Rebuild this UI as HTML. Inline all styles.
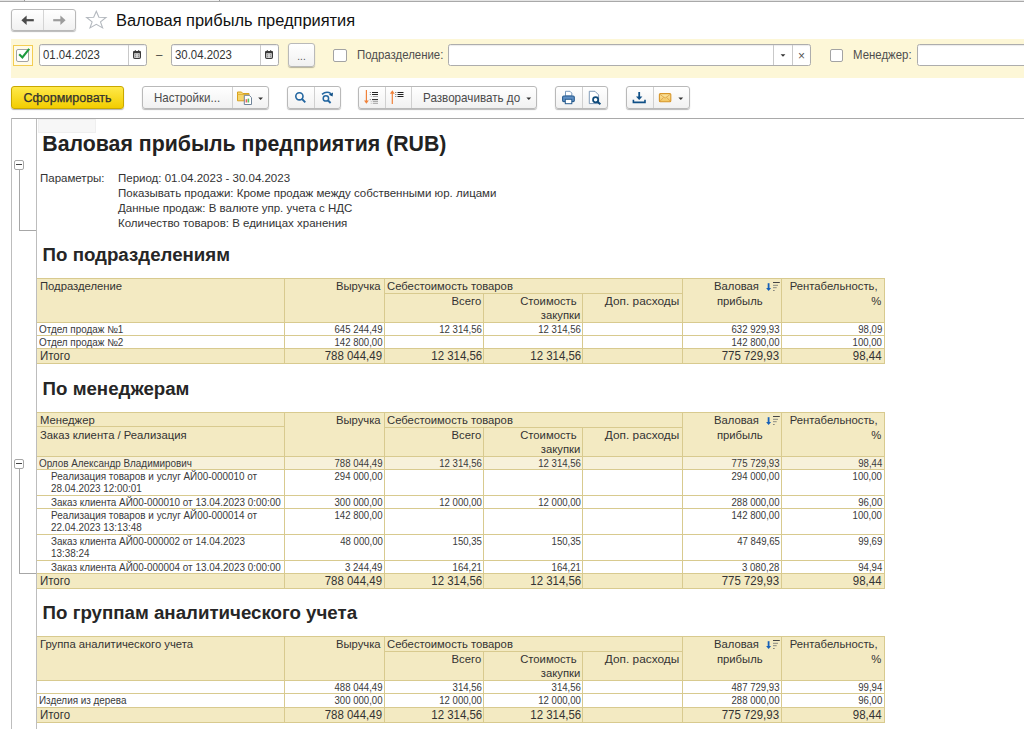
<!DOCTYPE html>
<html><head><meta charset="utf-8"><title>Валовая прибыль предприятия</title>
<style>
html,body{margin:0;padding:0;background:#fff;}
body{width:1024px;height:729px;position:relative;overflow:hidden;font-family:"Liberation Sans", sans-serif;}
svg{overflow:visible}
</style></head><body>
<div style="position:absolute;left:0px;top:0px;width:1024px;height:1px;background:#e5e5e5"></div>
<div style="position:absolute;left:25px;top:0px;width:194px;height:1px;background:#f2f2f2"></div>
<div style="position:absolute;left:0px;top:1px;width:1024px;height:1px;background:#a9a9a9"></div>
<div style="position:absolute;left:24px;top:0px;width:1px;height:1px;background:#9a9a9a"></div>
<div style="position:absolute;left:219px;top:0px;width:1px;height:1px;background:#9a9a9a"></div>
<div style="position:absolute;left:11px;top:9px;width:65px;height:22px;border:1px solid #b9b9b9;border-radius:3px;background:linear-gradient(#ffffff,#f1f1f1);box-shadow:0 1px 1px rgba(0,0,0,0.28);box-sizing:border-box"></div>
<div style="position:absolute;left:43px;top:10px;width:1px;height:20px;background:#d4d4d4"></div>
<svg style="position:absolute;left:11px;top:9px" width="65" height="22" viewBox="0 0 65 22"><path d="M13 11.2 L22.8 11.2" stroke="#4a4a4a" stroke-width="2.2"/><path d="M10.4 11.2 L15.6 6.4 L15.6 16 Z" fill="#4a4a4a"/><path d="M42.2 11.2 L52 11.2" stroke="#9c9c9c" stroke-width="2.2"/><path d="M54.6 11.2 L49.4 6.4 L49.4 16 Z" fill="#9c9c9c"/></svg>
<svg style="position:absolute;left:84px;top:8px" width="26" height="24" viewBox="0 0 26 24"><path d="M12.3 3.3 L14.9 9.2 L22.0 9.5 L16.5 13.9 L18.6 19.9 L12.3 16.3 L6.0 19.9 L8.1 13.9 L2.6 9.5 L9.7 9.2 Z" fill="none" stroke="#b3b8be" stroke-width="1.1" stroke-linejoin="miter"/></svg>
<div style="position:absolute;left:115.5px;top:9.94px;line-height:21px;font-size:17.2px;white-space:nowrap;transform:scaleX(0.955);transform-origin:left center;color:#111">Валовая прибыль предприятия</div>
<div style="position:absolute;left:11px;top:39px;width:1013px;height:39px;background:#fdf7d7"></div>
<div style="position:absolute;left:13px;top:45px;width:20px;height:21px;border:1px solid #f3cd52;background:#fffbe8;box-sizing:border-box"></div>
<div style="position:absolute;left:16px;top:49px;width:13px;height:13px;border:1px solid #a3a3a3;border-radius:2px;background:#fff;box-sizing:border-box"></div>
<svg style="position:absolute;left:16px;top:47px" width="16" height="16" viewBox="0 0 16 16"><path d="M3.2 7.2 L6.4 10.4 L13.2 1.8" fill="none" stroke="#1e9a3e" stroke-width="2.1"/></svg>
<div style="position:absolute;left:39px;top:44px;width:108px;height:22px;border:1px solid #adadad;border-radius:2.5px;background:#fff;box-sizing:border-box;box-shadow:inset 0 1px 1px rgba(0,0,0,0.08)"></div>
<div style="position:absolute;left:128px;top:45px;width:1px;height:20px;background:#c9c9c9"></div>
<svg style="position:absolute;left:132px;top:48.5px" width="10" height="11" viewBox="0 0 10 11"><rect x="1.6" y="2.6" width="6.8" height="6.9" rx="1.2" fill="#dcdcdc" stroke="#3a3a3a" stroke-width="1.2"/><rect x="1.2" y="2.2" width="7.6" height="2" fill="#3a3a3a"/><path d="M3.3 1.1 V2.6 M6.7 1.1 V2.6" stroke="#3a3a3a" stroke-width="1"/><path d="M3 5.9 H4.2 M5.8 5.9 H7 M3 7.8 H4.2 M5.8 7.8 H7" stroke="#666" stroke-width="0.9"/></svg>
<div style="position:absolute;left:43px;top:46.90px;line-height:16px;font-size:13px;white-space:nowrap;transform:scaleX(0.875);transform-origin:left center;color:#333">01.04.2023</div>
<div style="position:absolute;left:156px;top:47.38px;line-height:14px;font-size:11.6px;white-space:nowrap;color:#333">–</div>
<div style="position:absolute;left:171px;top:44px;width:108px;height:22px;border:1px solid #adadad;border-radius:2.5px;background:#fff;box-sizing:border-box;box-shadow:inset 0 1px 1px rgba(0,0,0,0.08)"></div>
<div style="position:absolute;left:260px;top:45px;width:1px;height:20px;background:#c9c9c9"></div>
<svg style="position:absolute;left:264px;top:48.5px" width="10" height="11" viewBox="0 0 10 11"><rect x="1.6" y="2.6" width="6.8" height="6.9" rx="1.2" fill="#dcdcdc" stroke="#3a3a3a" stroke-width="1.2"/><rect x="1.2" y="2.2" width="7.6" height="2" fill="#3a3a3a"/><path d="M3.3 1.1 V2.6 M6.7 1.1 V2.6" stroke="#3a3a3a" stroke-width="1"/><path d="M3 5.9 H4.2 M5.8 5.9 H7 M3 7.8 H4.2 M5.8 7.8 H7" stroke="#666" stroke-width="0.9"/></svg>
<div style="position:absolute;left:175px;top:46.90px;line-height:16px;font-size:13px;white-space:nowrap;transform:scaleX(0.875);transform-origin:left center;color:#333">30.04.2023</div>
<div style="position:absolute;left:288px;top:43px;width:27px;height:24px;border:1px solid #b9b9b9;border-radius:3px;background:linear-gradient(#ffffff,#f1f1f1);box-shadow:0 1px 1px rgba(0,0,0,0.28);box-sizing:border-box"></div>
<div style="position:absolute;left:101.5px;width:400px;top:50.53px;line-height:12px;font-size:10px;white-space:nowrap;text-align:center;color:#555">...</div>
<div style="position:absolute;left:333px;top:49px;width:14px;height:13px;border:1px solid #a3a3a3;border-radius:2px;background:#fff;box-sizing:border-box"></div>
<div style="position:absolute;left:357px;top:48.08px;line-height:14px;font-size:11.9px;white-space:nowrap;transform:scaleX(0.96);transform-origin:left center;color:#4d4d4d">Подразделение:</div>
<div style="position:absolute;left:448px;top:44px;width:363px;height:22px;border:1px solid #adadad;border-radius:2.5px;background:#fff;box-sizing:border-box;box-shadow:inset 0 1px 1px rgba(0,0,0,0.08)"></div>
<div style="position:absolute;left:773px;top:45px;width:1px;height:20px;background:#c9c9c9"></div>
<div style="position:absolute;left:792px;top:45px;width:1px;height:20px;background:#c9c9c9"></div>
<svg style="position:absolute;left:777px;top:50px" width="12" height="10" viewBox="0 0 12 10"><path d="M3.6 4.2 L8.4 4.2 L6 6.8 Z" fill="#333"/></svg>
<div style="position:absolute;left:601.5px;width:400px;top:48.84px;line-height:14px;font-size:12px;white-space:nowrap;text-align:center;color:#555">×</div>
<div style="position:absolute;left:830px;top:49px;width:13px;height:13px;border:1px solid #a3a3a3;border-radius:2px;background:#fff;box-sizing:border-box"></div>
<div style="position:absolute;left:853px;top:48.08px;line-height:14px;font-size:11.9px;white-space:nowrap;transform:scaleX(0.96);transform-origin:left center;color:#4d4d4d">Менеджер:</div>
<div style="position:absolute;left:917px;top:44px;width:120px;height:22px;border:1px solid #adadad;border-radius:2.5px;background:#fff;box-sizing:border-box;box-shadow:inset 0 1px 1px rgba(0,0,0,0.08)"></div>
<div style="position:absolute;left:11px;top:86px;width:113px;height:23px;border:1px solid #c9a800;border-radius:3px;background:linear-gradient(#ffe94a,#f2cd00);box-shadow:0 1px 1px rgba(0,0,0,0.3);box-sizing:border-box"></div>
<div style="position:absolute;left:-132.5px;width:400px;top:90.77px;line-height:15px;font-size:12.5px;white-space:nowrap;text-align:center;color:#303030;-webkit-text-stroke:0.25px #303030">Сформировать</div>
<div style="position:absolute;left:142px;top:86px;width:127px;height:23px;border:1px solid #b9b9b9;border-radius:3px;background:linear-gradient(#ffffff,#f1f1f1);box-shadow:0 1px 1px rgba(0,0,0,0.28);box-sizing:border-box"></div>
<div style="position:absolute;left:232px;top:87px;width:1px;height:21px;background:#d0d0d0"></div>
<div style="position:absolute;left:-13px;width:400px;top:90.68px;line-height:14px;font-size:11.9px;white-space:nowrap;text-align:center;transform:scaleX(0.97);transform-origin:center center;color:#4a4a4a">Настройки...</div>
<svg style="position:absolute;left:236px;top:89px" width="18" height="17" viewBox="0 0 18 17"><path d="M1.5 3 H5.5 L6.8 4.5 H13 V11.8 H1.5 Z" fill="#f6d66e" stroke="#d9a21e" stroke-width="1"/><path d="M1.5 5.5 H13" stroke="#e2b43c" stroke-width="1"/><path d="M8.3 6.3 H13.2 L15.5 8.6 V15.5 H8.3 Z" fill="#fff" stroke="#6f8399" stroke-width="1"/><rect x="9.6" y="10.2" width="1.6" height="3.3" fill="#ee6060"/><rect x="11.6" y="9.6" width="1.6" height="3.9" fill="#59c45f"/></svg>
<svg style="position:absolute;left:256px;top:94px" width="10" height="8" viewBox="0 0 10 8"><path d="M2.2 3.4 L7 3.4 L4.6 5.9 Z" fill="#333"/></svg>
<div style="position:absolute;left:287px;top:86px;width:54px;height:23px;border:1px solid #b9b9b9;border-radius:3px;background:linear-gradient(#ffffff,#f1f1f1);box-shadow:0 1px 1px rgba(0,0,0,0.28);box-sizing:border-box"></div>
<div style="position:absolute;left:314px;top:87px;width:1px;height:21px;background:#d0d0d0"></div>
<svg style="position:absolute;left:287px;top:86px" width="54" height="23" viewBox="0 0 54 23"><circle cx="12.4" cy="10.3" r="3.6" fill="none" stroke="#2366a0" stroke-width="1.6"/><path d="M15 13 L18.3 16.3" stroke="#2366a0" stroke-width="1.9"/><circle cx="38.9" cy="12.4" r="2.7" fill="none" stroke="#2366a0" stroke-width="1.5"/><path d="M41.1 14.5 L43.6 17" stroke="#2366a0" stroke-width="1.9"/><path d="M35 8.4 Q39.5 4.6 44 7.6" fill="none" stroke="#2366a0" stroke-width="1.5"/><path d="M46 6.4 L45.6 10.6 L41.8 8.8 Z" fill="#0f4f86"/></svg>
<div style="position:absolute;left:358px;top:86px;width:179px;height:23px;border:1px solid #b9b9b9;border-radius:3px;background:linear-gradient(#ffffff,#f1f1f1);box-shadow:0 1px 1px rgba(0,0,0,0.28);box-sizing:border-box"></div>
<div style="position:absolute;left:385px;top:87px;width:1px;height:21px;background:#d0d0d0"></div>
<div style="position:absolute;left:411px;top:87px;width:1px;height:21px;background:#d0d0d0"></div>
<svg style="position:absolute;left:358px;top:86px" width="54" height="23" viewBox="0 0 54 23"><path d="M8.4 4 V16" stroke="#f0823a" stroke-width="1.2"/><path d="M6 14.5 L10.8 14.5 L8.4 17.8 Z" fill="#f0823a"/><path d="M11.8 6.5 H12.8 M11.8 8.5 H12.8 M11.8 13.6 H12.8" stroke="#777" stroke-width="1"/><path d="M14 6.5 H20 M14 8.5 H20 M14 13.6 H20" stroke="#222" stroke-width="1"/><path d="M12.8 10.5 H13.6 M12.8 15.4 H13.6 M12.8 17.3 H13.6" stroke="#aaa" stroke-width="0.9"/><path d="M14.8 10.5 H20 M14.8 15.4 H20 M14.8 17.3 H20" stroke="#999" stroke-width="0.9"/><path d="M34.3 6 V18" stroke="#f0823a" stroke-width="1.2"/><path d="M31.9 7.8 L36.7 7.8 L34.3 4.3 Z" fill="#f0823a"/><path d="M37.3 6.5 H38.3 M37.3 8.5 H38.3 M37.3 10.5 H38.3" stroke="#666" stroke-width="1"/><path d="M39.5 6.5 H45.5 M39.5 8.5 H45.5 M39.5 10.5 H45.5" stroke="#222" stroke-width="1"/></svg>
<div style="position:absolute;left:423px;top:90.68px;line-height:14px;font-size:11.9px;white-space:nowrap;transform:scaleX(0.98);transform-origin:left center;color:#4a4a4a">Разворачивать до</div>
<svg style="position:absolute;left:524px;top:94px" width="12" height="8" viewBox="0 0 12 8"><path d="M2.4 3.6 L7.2 3.6 L4.8 6.1 Z" fill="#333"/></svg>
<div style="position:absolute;left:555px;top:86px;width:53px;height:23px;border:1px solid #b9b9b9;border-radius:3px;background:linear-gradient(#ffffff,#f1f1f1);box-shadow:0 1px 1px rgba(0,0,0,0.28);box-sizing:border-box"></div>
<div style="position:absolute;left:582px;top:87px;width:1px;height:21px;background:#d0d0d0"></div>
<svg style="position:absolute;left:555px;top:86px" width="53" height="23" viewBox="0 0 53 23"><path d="M10.5 5.3 H15 L16.8 7.1 V10 H10.5 Z" fill="#fff" stroke="#6a8fb5" stroke-width="0.9"/><rect x="7.6" y="10" width="11.7" height="5.6" rx="1.2" fill="#5f8fc4" stroke="#285d8f" stroke-width="1.1"/><rect x="10.3" y="13.3" width="6.5" height="4.4" fill="#fff" stroke="#285d8f" stroke-width="1"/><path d="M34.3 5.3 H40 L43.6 8.9 V17.6 H34.3 Z" fill="#fff" stroke="#7390b0" stroke-width="0.9"/><circle cx="40.6" cy="13.8" r="2.6" fill="#fff" stroke="#0e4a7a" stroke-width="1.7"/><path d="M42.5 15.8 L45.4 18.3" stroke="#0e4a7a" stroke-width="2"/></svg>
<div style="position:absolute;left:626px;top:86px;width:64px;height:23px;border:1px solid #b9b9b9;border-radius:3px;background:linear-gradient(#ffffff,#f1f1f1);box-shadow:0 1px 1px rgba(0,0,0,0.28);box-sizing:border-box"></div>
<div style="position:absolute;left:653px;top:87px;width:1px;height:21px;background:#d0d0d0"></div>
<svg style="position:absolute;left:626px;top:86px" width="64" height="23" viewBox="0 0 64 23"><path d="M13.2 6 V12.5" stroke="#0f4f86" stroke-width="1.8"/><path d="M10 10.6 L16.4 10.6 L13.2 14 Z" fill="#0f4f86"/><path d="M7.4 13.8 V16.4 H19 V13.8" fill="none" stroke="#0f4f86" stroke-width="1.6"/><defs><linearGradient id="env" x1="0" y1="0" x2="0" y2="1"><stop offset="0" stop-color="#fbe7a6"/><stop offset="1" stop-color="#f2c45c"/></linearGradient></defs><rect x="33.4" y="7.6" width="11.4" height="8.1" rx="1" fill="url(#env)" stroke="#d8962a" stroke-width="1.1"/><path d="M34 8.4 L39.1 12.2 L44.2 8.4 M34.2 15 L37.6 11.4 M44 15 L40.6 11.4" fill="none" stroke="#dba046" stroke-width="0.8"/></svg>
<svg style="position:absolute;left:676px;top:94px" width="12" height="8" viewBox="0 0 12 8"><path d="M2.4 3.4 L7.2 3.4 L4.8 5.9 Z" fill="#333"/></svg>
<div style="position:absolute;left:11px;top:118px;width:1013px;height:1px;background:#a9a9a9"></div>
<div style="position:absolute;left:11px;top:118px;width:1px;height:611px;background:#bdbdbd"></div>
<div style="position:absolute;left:36px;top:119px;width:1px;height:610px;background:#bdbdbd"></div>
<div style="position:absolute;left:38px;top:119px;width:58px;height:14px;background:#f7f7f7;border:1px solid #efefef;box-sizing:border-box"></div>
<div style="position:absolute;left:42.3px;top:131.02px;line-height:26px;font-size:21.3px;white-space:nowrap;color:#222;font-weight:bold">Валовая прибыль предприятия (RUB)</div>
<div style="position:absolute;left:14px;top:160px;width:10px;height:10px;border:1px solid #a7a7a7;border-radius:2px;background:#fff;box-sizing:border-box"></div>
<div style="position:absolute;left:16px;top:164px;width:6px;height:1px;background:#444"></div>
<div style="position:absolute;left:19px;top:170px;width:1px;height:61px;background:#a7a7a7"></div>
<div style="position:absolute;left:19px;top:230px;width:17px;height:1px;background:#a7a7a7"></div>
<div style="position:absolute;left:40px;top:170.82px;line-height:14px;font-size:11.5px;white-space:nowrap;color:#333">Параметры:</div>
<div style="position:absolute;left:118px;top:170.82px;line-height:14px;font-size:11.5px;white-space:nowrap;color:#333">Период: 01.04.2023 - 30.04.2023</div>
<div style="position:absolute;left:118px;top:185.72px;line-height:14px;font-size:11.5px;white-space:nowrap;color:#333">Показывать продажи: Кроме продаж между собственными юр. лицами</div>
<div style="position:absolute;left:118px;top:200.62px;line-height:14px;font-size:11.5px;white-space:nowrap;color:#333">Данные продаж: В валюте упр. учета с НДС</div>
<div style="position:absolute;left:118px;top:215.52px;line-height:14px;font-size:11.5px;white-space:nowrap;color:#333">Количество товаров: В единицах хранения</div>
<div style="position:absolute;left:42.6px;top:243.72px;line-height:22px;font-size:18.7px;white-space:nowrap;color:#262626;font-weight:bold">По подразделениям</div>
<div style="position:absolute;left:37px;top:278px;width:847px;height:44px;background:#f3eac2"></div>
<div style="position:absolute;left:37px;top:278px;width:848px;height:1px;background:#d8ca8f"></div>
<div style="position:absolute;left:37px;top:322px;width:848px;height:1px;background:#d8ca8f"></div>
<div style="position:absolute;left:284px;top:278px;width:1px;height:44px;background:#d8ca8f"></div>
<div style="position:absolute;left:384px;top:278px;width:1px;height:44px;background:#d8ca8f"></div>
<div style="position:absolute;left:483px;top:293px;width:1px;height:29px;background:#d8ca8f"></div>
<div style="position:absolute;left:582px;top:293px;width:1px;height:29px;background:#d8ca8f"></div>
<div style="position:absolute;left:682px;top:278px;width:1px;height:44px;background:#d8ca8f"></div>
<div style="position:absolute;left:781px;top:278px;width:1px;height:44px;background:#d8ca8f"></div>
<div style="position:absolute;left:884px;top:278px;width:1px;height:44px;background:#d8ca8f"></div>
<div style="position:absolute;left:384px;top:293px;width:298px;height:1px;background:#d8ca8f"></div>
<div style="position:absolute;left:40px;top:279.02px;line-height:14px;font-size:11.5px;white-space:nowrap;transform:scaleX(0.98);transform-origin:left center;color:#333">Подразделение</div>
<div style="position:absolute;right:643px;top:279.02px;line-height:14px;font-size:11.5px;white-space:nowrap;text-align:right;transform:scaleX(0.98);transform-origin:right center;color:#333">Выручка</div>
<div style="position:absolute;left:387px;top:279.02px;line-height:14px;font-size:11.5px;white-space:nowrap;transform:scaleX(0.98);transform-origin:left center;color:#333">Себестоимость товаров</div>
<div style="position:absolute;right:543px;top:293.52px;line-height:14px;font-size:11.5px;white-space:nowrap;text-align:right;transform:scaleX(0.98);transform-origin:right center;color:#333">Всего</div>
<div style="position:absolute;right:447.5px;top:293.52px;line-height:14px;font-size:11.5px;white-space:nowrap;text-align:right;transform:scaleX(0.98);transform-origin:right center;color:#333">Стоимость</div>
<div style="position:absolute;right:444px;top:307.52px;line-height:14px;font-size:11.5px;white-space:nowrap;text-align:right;transform:scaleX(0.98);transform-origin:right center;color:#333">закупки</div>
<div style="position:absolute;right:344.5px;top:293.52px;line-height:14px;font-size:11.5px;white-space:nowrap;text-align:right;transform:scaleX(1.03);transform-origin:right center;color:#333">Доп. расходы</div>
<div style="position:absolute;right:265px;top:279.02px;line-height:14px;font-size:11.5px;white-space:nowrap;text-align:right;transform:scaleX(0.98);transform-origin:right center;color:#333">Валовая</div>
<div style="position:absolute;right:261px;top:293.52px;line-height:14px;font-size:11.5px;white-space:nowrap;text-align:right;transform:scaleX(0.98);transform-origin:right center;color:#333">прибыль</div>
<svg style="position:absolute;left:765px;top:281px" width="16" height="11" viewBox="0 0 16 11"><path d="M3.6 2.2 V7.6" stroke="#1660b8" stroke-width="1.8"/><path d="M1.1 6.9 L6.1 6.9 L3.6 9.9 Z" fill="#1660b8"/><path d="M8 1.5 H14.8" stroke="#444" stroke-width="1"/><path d="M8 4.3 H13 M8 6.7 H11.7 M8 9.5 H9.7" stroke="#8a8a80" stroke-width="1"/></svg>
<div style="position:absolute;right:146.5px;top:279.02px;line-height:14px;font-size:11.5px;white-space:nowrap;text-align:right;transform:scaleX(0.98);transform-origin:right center;color:#333">Рентабельность,</div>
<div style="position:absolute;right:143px;top:293.52px;line-height:14px;font-size:11.5px;white-space:nowrap;text-align:right;transform:scaleX(0.98);transform-origin:right center;color:#333">%</div>
<div style="position:absolute;left:37px;top:323px;width:847px;height:12px;background:#fff"></div>
<div style="position:absolute;left:284px;top:322px;width:1px;height:13px;background:#d8ca8f"></div>
<div style="position:absolute;left:384px;top:322px;width:1px;height:13px;background:#d8ca8f"></div>
<div style="position:absolute;left:483px;top:322px;width:1px;height:13px;background:#d8ca8f"></div>
<div style="position:absolute;left:582px;top:322px;width:1px;height:13px;background:#d8ca8f"></div>
<div style="position:absolute;left:682px;top:322px;width:1px;height:13px;background:#d8ca8f"></div>
<div style="position:absolute;left:781px;top:322px;width:1px;height:13px;background:#d8ca8f"></div>
<div style="position:absolute;left:884px;top:322px;width:1px;height:13px;background:#d8ca8f"></div>
<div style="position:absolute;left:37px;top:335px;width:848px;height:1px;background:#d8ca8f"></div>
<div style="position:absolute;left:38.5px;top:323.70px;line-height:12px;font-size:10.1px;white-space:nowrap;transform:scaleX(0.98);transform-origin:left center;color:#3a3a3a">Отдел продаж №1</div>
<div style="position:absolute;right:641.5px;top:323.70px;line-height:12px;font-size:10.1px;white-space:nowrap;text-align:right;transform:scaleX(0.95);transform-origin:right center;color:#3a3a3a">645 244,49</div>
<div style="position:absolute;right:542.5px;top:323.70px;line-height:12px;font-size:10.1px;white-space:nowrap;text-align:right;transform:scaleX(0.95);transform-origin:right center;color:#3a3a3a">12 314,56</div>
<div style="position:absolute;right:443px;top:323.70px;line-height:12px;font-size:10.1px;white-space:nowrap;text-align:right;transform:scaleX(0.95);transform-origin:right center;color:#3a3a3a">12 314,56</div>
<div style="position:absolute;right:244.5px;top:323.70px;line-height:12px;font-size:10.1px;white-space:nowrap;text-align:right;transform:scaleX(0.95);transform-origin:right center;color:#3a3a3a">632 929,93</div>
<div style="position:absolute;right:142px;top:323.70px;line-height:12px;font-size:10.1px;white-space:nowrap;text-align:right;transform:scaleX(0.95);transform-origin:right center;color:#3a3a3a">98,09</div>
<div style="position:absolute;left:37px;top:336px;width:847px;height:12px;background:#fff"></div>
<div style="position:absolute;left:284px;top:335px;width:1px;height:13px;background:#d8ca8f"></div>
<div style="position:absolute;left:384px;top:335px;width:1px;height:13px;background:#d8ca8f"></div>
<div style="position:absolute;left:483px;top:335px;width:1px;height:13px;background:#d8ca8f"></div>
<div style="position:absolute;left:582px;top:335px;width:1px;height:13px;background:#d8ca8f"></div>
<div style="position:absolute;left:682px;top:335px;width:1px;height:13px;background:#d8ca8f"></div>
<div style="position:absolute;left:781px;top:335px;width:1px;height:13px;background:#d8ca8f"></div>
<div style="position:absolute;left:884px;top:335px;width:1px;height:13px;background:#d8ca8f"></div>
<div style="position:absolute;left:37px;top:348px;width:848px;height:1px;background:#d8ca8f"></div>
<div style="position:absolute;left:38.5px;top:336.70px;line-height:12px;font-size:10.1px;white-space:nowrap;transform:scaleX(0.98);transform-origin:left center;color:#3a3a3a">Отдел продаж №2</div>
<div style="position:absolute;right:641.5px;top:336.70px;line-height:12px;font-size:10.1px;white-space:nowrap;text-align:right;transform:scaleX(0.95);transform-origin:right center;color:#3a3a3a">142 800,00</div>
<div style="position:absolute;right:244.5px;top:336.70px;line-height:12px;font-size:10.1px;white-space:nowrap;text-align:right;transform:scaleX(0.95);transform-origin:right center;color:#3a3a3a">142 800,00</div>
<div style="position:absolute;right:142px;top:336.70px;line-height:12px;font-size:10.1px;white-space:nowrap;text-align:right;transform:scaleX(0.95);transform-origin:right center;color:#3a3a3a">100,00</div>
<div style="position:absolute;left:37px;top:349px;width:847px;height:14px;background:#f3eac2"></div>
<div style="position:absolute;left:284px;top:348px;width:1px;height:15px;background:#d8ca8f"></div>
<div style="position:absolute;left:384px;top:348px;width:1px;height:15px;background:#d8ca8f"></div>
<div style="position:absolute;left:483px;top:348px;width:1px;height:15px;background:#d8ca8f"></div>
<div style="position:absolute;left:582px;top:348px;width:1px;height:15px;background:#d8ca8f"></div>
<div style="position:absolute;left:682px;top:348px;width:1px;height:15px;background:#d8ca8f"></div>
<div style="position:absolute;left:781px;top:348px;width:1px;height:15px;background:#d8ca8f"></div>
<div style="position:absolute;left:884px;top:348px;width:1px;height:15px;background:#d8ca8f"></div>
<div style="position:absolute;left:37px;top:363px;width:848px;height:1px;background:#d8ca8f"></div>
<div style="position:absolute;left:39.5px;top:348.97px;line-height:15px;font-size:12.2px;white-space:nowrap;transform:scaleX(0.94);transform-origin:left center;color:#333">Итого</div>
<div style="position:absolute;right:641.7px;top:348.97px;line-height:15px;font-size:12.2px;white-space:nowrap;text-align:right;transform:scaleX(0.94);transform-origin:right center;color:#333">788 044,49</div>
<div style="position:absolute;right:542.2px;top:348.97px;line-height:15px;font-size:12.2px;white-space:nowrap;text-align:right;transform:scaleX(0.94);transform-origin:right center;color:#333">12 314,56</div>
<div style="position:absolute;right:443px;top:348.97px;line-height:15px;font-size:12.2px;white-space:nowrap;text-align:right;transform:scaleX(0.94);transform-origin:right center;color:#333">12 314,56</div>
<div style="position:absolute;right:245.20000000000005px;top:348.97px;line-height:15px;font-size:12.2px;white-space:nowrap;text-align:right;transform:scaleX(0.94);transform-origin:right center;color:#333">775 729,93</div>
<div style="position:absolute;right:142.5px;top:348.97px;line-height:15px;font-size:12.2px;white-space:nowrap;text-align:right;transform:scaleX(0.94);transform-origin:right center;color:#333">98,44</div>
<div style="position:absolute;left:42.6px;top:377.82px;line-height:22px;font-size:18.7px;white-space:nowrap;color:#262626;font-weight:bold">По менеджерам</div>
<div style="position:absolute;left:37px;top:412px;width:847px;height:44px;background:#f3eac2"></div>
<div style="position:absolute;left:37px;top:412px;width:848px;height:1px;background:#d8ca8f"></div>
<div style="position:absolute;left:37px;top:456px;width:848px;height:1px;background:#d8ca8f"></div>
<div style="position:absolute;left:284px;top:412px;width:1px;height:44px;background:#d8ca8f"></div>
<div style="position:absolute;left:384px;top:412px;width:1px;height:44px;background:#d8ca8f"></div>
<div style="position:absolute;left:483px;top:427px;width:1px;height:29px;background:#d8ca8f"></div>
<div style="position:absolute;left:582px;top:427px;width:1px;height:29px;background:#d8ca8f"></div>
<div style="position:absolute;left:682px;top:412px;width:1px;height:44px;background:#d8ca8f"></div>
<div style="position:absolute;left:781px;top:412px;width:1px;height:44px;background:#d8ca8f"></div>
<div style="position:absolute;left:884px;top:412px;width:1px;height:44px;background:#d8ca8f"></div>
<div style="position:absolute;left:384px;top:427px;width:298px;height:1px;background:#d8ca8f"></div>
<div style="position:absolute;left:37px;top:426px;width:247px;height:1px;background:#d8ca8f"></div>
<div style="position:absolute;left:40px;top:413.02px;line-height:14px;font-size:11.5px;white-space:nowrap;transform:scaleX(0.98);transform-origin:left center;color:#333">Менеджер</div>
<div style="position:absolute;left:40px;top:428.02px;line-height:14px;font-size:11.5px;white-space:nowrap;transform:scaleX(0.98);transform-origin:left center;color:#333">Заказ клиента / Реализация</div>
<div style="position:absolute;right:643px;top:413.02px;line-height:14px;font-size:11.5px;white-space:nowrap;text-align:right;transform:scaleX(0.98);transform-origin:right center;color:#333">Выручка</div>
<div style="position:absolute;left:387px;top:413.02px;line-height:14px;font-size:11.5px;white-space:nowrap;transform:scaleX(0.98);transform-origin:left center;color:#333">Себестоимость товаров</div>
<div style="position:absolute;right:543px;top:427.52px;line-height:14px;font-size:11.5px;white-space:nowrap;text-align:right;transform:scaleX(0.98);transform-origin:right center;color:#333">Всего</div>
<div style="position:absolute;right:447.5px;top:427.52px;line-height:14px;font-size:11.5px;white-space:nowrap;text-align:right;transform:scaleX(0.98);transform-origin:right center;color:#333">Стоимость</div>
<div style="position:absolute;right:444px;top:441.52px;line-height:14px;font-size:11.5px;white-space:nowrap;text-align:right;transform:scaleX(0.98);transform-origin:right center;color:#333">закупки</div>
<div style="position:absolute;right:344.5px;top:427.52px;line-height:14px;font-size:11.5px;white-space:nowrap;text-align:right;transform:scaleX(1.03);transform-origin:right center;color:#333">Доп. расходы</div>
<div style="position:absolute;right:265px;top:413.02px;line-height:14px;font-size:11.5px;white-space:nowrap;text-align:right;transform:scaleX(0.98);transform-origin:right center;color:#333">Валовая</div>
<div style="position:absolute;right:261px;top:427.52px;line-height:14px;font-size:11.5px;white-space:nowrap;text-align:right;transform:scaleX(0.98);transform-origin:right center;color:#333">прибыль</div>
<svg style="position:absolute;left:765px;top:415px" width="16" height="11" viewBox="0 0 16 11"><path d="M3.6 2.2 V7.6" stroke="#1660b8" stroke-width="1.8"/><path d="M1.1 6.9 L6.1 6.9 L3.6 9.9 Z" fill="#1660b8"/><path d="M8 1.5 H14.8" stroke="#444" stroke-width="1"/><path d="M8 4.3 H13 M8 6.7 H11.7 M8 9.5 H9.7" stroke="#8a8a80" stroke-width="1"/></svg>
<div style="position:absolute;right:146.5px;top:413.02px;line-height:14px;font-size:11.5px;white-space:nowrap;text-align:right;transform:scaleX(0.98);transform-origin:right center;color:#333">Рентабельность,</div>
<div style="position:absolute;right:143px;top:427.52px;line-height:14px;font-size:11.5px;white-space:nowrap;text-align:right;transform:scaleX(0.98);transform-origin:right center;color:#333">%</div>
<div style="position:absolute;left:37px;top:457px;width:847px;height:12px;background:#f7f1da"></div>
<div style="position:absolute;left:284px;top:456px;width:1px;height:13px;background:#d8ca8f"></div>
<div style="position:absolute;left:384px;top:456px;width:1px;height:13px;background:#d8ca8f"></div>
<div style="position:absolute;left:483px;top:456px;width:1px;height:13px;background:#d8ca8f"></div>
<div style="position:absolute;left:582px;top:456px;width:1px;height:13px;background:#d8ca8f"></div>
<div style="position:absolute;left:682px;top:456px;width:1px;height:13px;background:#d8ca8f"></div>
<div style="position:absolute;left:781px;top:456px;width:1px;height:13px;background:#d8ca8f"></div>
<div style="position:absolute;left:884px;top:456px;width:1px;height:13px;background:#d8ca8f"></div>
<div style="position:absolute;left:37px;top:469px;width:848px;height:1px;background:#d8ca8f"></div>
<div style="position:absolute;left:38.5px;top:457.70px;line-height:12px;font-size:10.1px;white-space:nowrap;transform:scaleX(0.98);transform-origin:left center;color:#3a3a3a">Орлов Александр Владимирович</div>
<div style="position:absolute;right:641.5px;top:457.70px;line-height:12px;font-size:10.1px;white-space:nowrap;text-align:right;transform:scaleX(0.95);transform-origin:right center;color:#3a3a3a">788 044,49</div>
<div style="position:absolute;right:542.5px;top:457.70px;line-height:12px;font-size:10.1px;white-space:nowrap;text-align:right;transform:scaleX(0.95);transform-origin:right center;color:#3a3a3a">12 314,56</div>
<div style="position:absolute;right:443px;top:457.70px;line-height:12px;font-size:10.1px;white-space:nowrap;text-align:right;transform:scaleX(0.95);transform-origin:right center;color:#3a3a3a">12 314,56</div>
<div style="position:absolute;right:244.5px;top:457.70px;line-height:12px;font-size:10.1px;white-space:nowrap;text-align:right;transform:scaleX(0.95);transform-origin:right center;color:#3a3a3a">775 729,93</div>
<div style="position:absolute;right:142px;top:457.70px;line-height:12px;font-size:10.1px;white-space:nowrap;text-align:right;transform:scaleX(0.95);transform-origin:right center;color:#3a3a3a">98,44</div>
<div style="position:absolute;left:37px;top:470px;width:847px;height:25px;background:#fff"></div>
<div style="position:absolute;left:284px;top:469px;width:1px;height:26px;background:#d8ca8f"></div>
<div style="position:absolute;left:384px;top:469px;width:1px;height:26px;background:#d8ca8f"></div>
<div style="position:absolute;left:483px;top:469px;width:1px;height:26px;background:#d8ca8f"></div>
<div style="position:absolute;left:582px;top:469px;width:1px;height:26px;background:#d8ca8f"></div>
<div style="position:absolute;left:682px;top:469px;width:1px;height:26px;background:#d8ca8f"></div>
<div style="position:absolute;left:781px;top:469px;width:1px;height:26px;background:#d8ca8f"></div>
<div style="position:absolute;left:884px;top:469px;width:1px;height:26px;background:#d8ca8f"></div>
<div style="position:absolute;left:37px;top:495px;width:848px;height:1px;background:#d8ca8f"></div>
<div style="position:absolute;left:51px;top:470.70px;line-height:12px;font-size:10.1px;white-space:nowrap;transform:scaleX(0.98);transform-origin:left center;color:#3a3a3a">Реализация товаров и услуг АЙ00-000010 от</div>
<div style="position:absolute;left:51px;top:483.10px;line-height:12px;font-size:10.1px;white-space:nowrap;transform:scaleX(0.98);transform-origin:left center;color:#3a3a3a">28.04.2023 12:00:01</div>
<div style="position:absolute;right:641.5px;top:470.70px;line-height:12px;font-size:10.1px;white-space:nowrap;text-align:right;transform:scaleX(0.95);transform-origin:right center;color:#3a3a3a">294 000,00</div>
<div style="position:absolute;right:244.5px;top:470.70px;line-height:12px;font-size:10.1px;white-space:nowrap;text-align:right;transform:scaleX(0.95);transform-origin:right center;color:#3a3a3a">294 000,00</div>
<div style="position:absolute;right:142px;top:470.70px;line-height:12px;font-size:10.1px;white-space:nowrap;text-align:right;transform:scaleX(0.95);transform-origin:right center;color:#3a3a3a">100,00</div>
<div style="position:absolute;left:37px;top:496px;width:847px;height:12px;background:#fff"></div>
<div style="position:absolute;left:284px;top:495px;width:1px;height:13px;background:#d8ca8f"></div>
<div style="position:absolute;left:384px;top:495px;width:1px;height:13px;background:#d8ca8f"></div>
<div style="position:absolute;left:483px;top:495px;width:1px;height:13px;background:#d8ca8f"></div>
<div style="position:absolute;left:582px;top:495px;width:1px;height:13px;background:#d8ca8f"></div>
<div style="position:absolute;left:682px;top:495px;width:1px;height:13px;background:#d8ca8f"></div>
<div style="position:absolute;left:781px;top:495px;width:1px;height:13px;background:#d8ca8f"></div>
<div style="position:absolute;left:884px;top:495px;width:1px;height:13px;background:#d8ca8f"></div>
<div style="position:absolute;left:37px;top:508px;width:848px;height:1px;background:#d8ca8f"></div>
<div style="position:absolute;left:51px;top:496.70px;line-height:12px;font-size:10.1px;white-space:nowrap;transform:scaleX(0.98);transform-origin:left center;color:#3a3a3a">Заказ клиента АЙ00-000010 от 13.04.2023 0:00:00</div>
<div style="position:absolute;right:641.5px;top:496.70px;line-height:12px;font-size:10.1px;white-space:nowrap;text-align:right;transform:scaleX(0.95);transform-origin:right center;color:#3a3a3a">300 000,00</div>
<div style="position:absolute;right:542.5px;top:496.70px;line-height:12px;font-size:10.1px;white-space:nowrap;text-align:right;transform:scaleX(0.95);transform-origin:right center;color:#3a3a3a">12 000,00</div>
<div style="position:absolute;right:443px;top:496.70px;line-height:12px;font-size:10.1px;white-space:nowrap;text-align:right;transform:scaleX(0.95);transform-origin:right center;color:#3a3a3a">12 000,00</div>
<div style="position:absolute;right:244.5px;top:496.70px;line-height:12px;font-size:10.1px;white-space:nowrap;text-align:right;transform:scaleX(0.95);transform-origin:right center;color:#3a3a3a">288 000,00</div>
<div style="position:absolute;right:142px;top:496.70px;line-height:12px;font-size:10.1px;white-space:nowrap;text-align:right;transform:scaleX(0.95);transform-origin:right center;color:#3a3a3a">96,00</div>
<div style="position:absolute;left:37px;top:509px;width:847px;height:25px;background:#fff"></div>
<div style="position:absolute;left:284px;top:508px;width:1px;height:26px;background:#d8ca8f"></div>
<div style="position:absolute;left:384px;top:508px;width:1px;height:26px;background:#d8ca8f"></div>
<div style="position:absolute;left:483px;top:508px;width:1px;height:26px;background:#d8ca8f"></div>
<div style="position:absolute;left:582px;top:508px;width:1px;height:26px;background:#d8ca8f"></div>
<div style="position:absolute;left:682px;top:508px;width:1px;height:26px;background:#d8ca8f"></div>
<div style="position:absolute;left:781px;top:508px;width:1px;height:26px;background:#d8ca8f"></div>
<div style="position:absolute;left:884px;top:508px;width:1px;height:26px;background:#d8ca8f"></div>
<div style="position:absolute;left:37px;top:534px;width:848px;height:1px;background:#d8ca8f"></div>
<div style="position:absolute;left:51px;top:509.70px;line-height:12px;font-size:10.1px;white-space:nowrap;transform:scaleX(0.98);transform-origin:left center;color:#3a3a3a">Реализация товаров и услуг АЙ00-000014 от</div>
<div style="position:absolute;left:51px;top:522.10px;line-height:12px;font-size:10.1px;white-space:nowrap;transform:scaleX(0.98);transform-origin:left center;color:#3a3a3a">22.04.2023 13:13:48</div>
<div style="position:absolute;right:641.5px;top:509.70px;line-height:12px;font-size:10.1px;white-space:nowrap;text-align:right;transform:scaleX(0.95);transform-origin:right center;color:#3a3a3a">142 800,00</div>
<div style="position:absolute;right:244.5px;top:509.70px;line-height:12px;font-size:10.1px;white-space:nowrap;text-align:right;transform:scaleX(0.95);transform-origin:right center;color:#3a3a3a">142 800,00</div>
<div style="position:absolute;right:142px;top:509.70px;line-height:12px;font-size:10.1px;white-space:nowrap;text-align:right;transform:scaleX(0.95);transform-origin:right center;color:#3a3a3a">100,00</div>
<div style="position:absolute;left:37px;top:535px;width:847px;height:25px;background:#fff"></div>
<div style="position:absolute;left:284px;top:534px;width:1px;height:26px;background:#d8ca8f"></div>
<div style="position:absolute;left:384px;top:534px;width:1px;height:26px;background:#d8ca8f"></div>
<div style="position:absolute;left:483px;top:534px;width:1px;height:26px;background:#d8ca8f"></div>
<div style="position:absolute;left:582px;top:534px;width:1px;height:26px;background:#d8ca8f"></div>
<div style="position:absolute;left:682px;top:534px;width:1px;height:26px;background:#d8ca8f"></div>
<div style="position:absolute;left:781px;top:534px;width:1px;height:26px;background:#d8ca8f"></div>
<div style="position:absolute;left:884px;top:534px;width:1px;height:26px;background:#d8ca8f"></div>
<div style="position:absolute;left:37px;top:560px;width:848px;height:1px;background:#d8ca8f"></div>
<div style="position:absolute;left:51px;top:535.70px;line-height:12px;font-size:10.1px;white-space:nowrap;transform:scaleX(0.98);transform-origin:left center;color:#3a3a3a">Заказ клиента АЙ00-000002 от 14.04.2023</div>
<div style="position:absolute;left:51px;top:548.10px;line-height:12px;font-size:10.1px;white-space:nowrap;transform:scaleX(0.98);transform-origin:left center;color:#3a3a3a">13:38:24</div>
<div style="position:absolute;right:641.5px;top:535.70px;line-height:12px;font-size:10.1px;white-space:nowrap;text-align:right;transform:scaleX(0.95);transform-origin:right center;color:#3a3a3a">48 000,00</div>
<div style="position:absolute;right:542.5px;top:535.70px;line-height:12px;font-size:10.1px;white-space:nowrap;text-align:right;transform:scaleX(0.95);transform-origin:right center;color:#3a3a3a">150,35</div>
<div style="position:absolute;right:443px;top:535.70px;line-height:12px;font-size:10.1px;white-space:nowrap;text-align:right;transform:scaleX(0.95);transform-origin:right center;color:#3a3a3a">150,35</div>
<div style="position:absolute;right:244.5px;top:535.70px;line-height:12px;font-size:10.1px;white-space:nowrap;text-align:right;transform:scaleX(0.95);transform-origin:right center;color:#3a3a3a">47 849,65</div>
<div style="position:absolute;right:142px;top:535.70px;line-height:12px;font-size:10.1px;white-space:nowrap;text-align:right;transform:scaleX(0.95);transform-origin:right center;color:#3a3a3a">99,69</div>
<div style="position:absolute;left:37px;top:561px;width:847px;height:12px;background:#fff"></div>
<div style="position:absolute;left:284px;top:560px;width:1px;height:13px;background:#d8ca8f"></div>
<div style="position:absolute;left:384px;top:560px;width:1px;height:13px;background:#d8ca8f"></div>
<div style="position:absolute;left:483px;top:560px;width:1px;height:13px;background:#d8ca8f"></div>
<div style="position:absolute;left:582px;top:560px;width:1px;height:13px;background:#d8ca8f"></div>
<div style="position:absolute;left:682px;top:560px;width:1px;height:13px;background:#d8ca8f"></div>
<div style="position:absolute;left:781px;top:560px;width:1px;height:13px;background:#d8ca8f"></div>
<div style="position:absolute;left:884px;top:560px;width:1px;height:13px;background:#d8ca8f"></div>
<div style="position:absolute;left:37px;top:573px;width:848px;height:1px;background:#d8ca8f"></div>
<div style="position:absolute;left:51px;top:561.70px;line-height:12px;font-size:10.1px;white-space:nowrap;transform:scaleX(0.98);transform-origin:left center;color:#3a3a3a">Заказ клиента АЙ00-000004 от 13.04.2023 0:00:00</div>
<div style="position:absolute;right:641.5px;top:561.70px;line-height:12px;font-size:10.1px;white-space:nowrap;text-align:right;transform:scaleX(0.95);transform-origin:right center;color:#3a3a3a">3 244,49</div>
<div style="position:absolute;right:542.5px;top:561.70px;line-height:12px;font-size:10.1px;white-space:nowrap;text-align:right;transform:scaleX(0.95);transform-origin:right center;color:#3a3a3a">164,21</div>
<div style="position:absolute;right:443px;top:561.70px;line-height:12px;font-size:10.1px;white-space:nowrap;text-align:right;transform:scaleX(0.95);transform-origin:right center;color:#3a3a3a">164,21</div>
<div style="position:absolute;right:244.5px;top:561.70px;line-height:12px;font-size:10.1px;white-space:nowrap;text-align:right;transform:scaleX(0.95);transform-origin:right center;color:#3a3a3a">3 080,28</div>
<div style="position:absolute;right:142px;top:561.70px;line-height:12px;font-size:10.1px;white-space:nowrap;text-align:right;transform:scaleX(0.95);transform-origin:right center;color:#3a3a3a">94,94</div>
<div style="position:absolute;left:37px;top:574px;width:847px;height:14px;background:#f3eac2"></div>
<div style="position:absolute;left:284px;top:573px;width:1px;height:15px;background:#d8ca8f"></div>
<div style="position:absolute;left:384px;top:573px;width:1px;height:15px;background:#d8ca8f"></div>
<div style="position:absolute;left:483px;top:573px;width:1px;height:15px;background:#d8ca8f"></div>
<div style="position:absolute;left:582px;top:573px;width:1px;height:15px;background:#d8ca8f"></div>
<div style="position:absolute;left:682px;top:573px;width:1px;height:15px;background:#d8ca8f"></div>
<div style="position:absolute;left:781px;top:573px;width:1px;height:15px;background:#d8ca8f"></div>
<div style="position:absolute;left:884px;top:573px;width:1px;height:15px;background:#d8ca8f"></div>
<div style="position:absolute;left:37px;top:588px;width:848px;height:1px;background:#d8ca8f"></div>
<div style="position:absolute;left:39.5px;top:573.97px;line-height:15px;font-size:12.2px;white-space:nowrap;transform:scaleX(0.94);transform-origin:left center;color:#333">Итого</div>
<div style="position:absolute;right:641.7px;top:573.97px;line-height:15px;font-size:12.2px;white-space:nowrap;text-align:right;transform:scaleX(0.94);transform-origin:right center;color:#333">788 044,49</div>
<div style="position:absolute;right:542.2px;top:573.97px;line-height:15px;font-size:12.2px;white-space:nowrap;text-align:right;transform:scaleX(0.94);transform-origin:right center;color:#333">12 314,56</div>
<div style="position:absolute;right:443px;top:573.97px;line-height:15px;font-size:12.2px;white-space:nowrap;text-align:right;transform:scaleX(0.94);transform-origin:right center;color:#333">12 314,56</div>
<div style="position:absolute;right:245.20000000000005px;top:573.97px;line-height:15px;font-size:12.2px;white-space:nowrap;text-align:right;transform:scaleX(0.94);transform-origin:right center;color:#333">775 729,93</div>
<div style="position:absolute;right:142.5px;top:573.97px;line-height:15px;font-size:12.2px;white-space:nowrap;text-align:right;transform:scaleX(0.94);transform-origin:right center;color:#333">98,44</div>
<div style="position:absolute;left:14px;top:459px;width:10px;height:10px;border:1px solid #a7a7a7;border-radius:2px;background:#fff;box-sizing:border-box"></div>
<div style="position:absolute;left:16px;top:463px;width:6px;height:1px;background:#444"></div>
<div style="position:absolute;left:19px;top:469px;width:1px;height:105px;background:#a7a7a7"></div>
<div style="position:absolute;left:19px;top:573px;width:17px;height:1px;background:#a7a7a7"></div>
<div style="position:absolute;left:42.6px;top:602.02px;line-height:22px;font-size:18.7px;white-space:nowrap;color:#262626;font-weight:bold">По группам аналитического учета</div>
<div style="position:absolute;left:37px;top:636px;width:847px;height:44px;background:#f3eac2"></div>
<div style="position:absolute;left:37px;top:636px;width:848px;height:1px;background:#d8ca8f"></div>
<div style="position:absolute;left:37px;top:680px;width:848px;height:1px;background:#d8ca8f"></div>
<div style="position:absolute;left:284px;top:636px;width:1px;height:44px;background:#d8ca8f"></div>
<div style="position:absolute;left:384px;top:636px;width:1px;height:44px;background:#d8ca8f"></div>
<div style="position:absolute;left:483px;top:651px;width:1px;height:29px;background:#d8ca8f"></div>
<div style="position:absolute;left:582px;top:651px;width:1px;height:29px;background:#d8ca8f"></div>
<div style="position:absolute;left:682px;top:636px;width:1px;height:44px;background:#d8ca8f"></div>
<div style="position:absolute;left:781px;top:636px;width:1px;height:44px;background:#d8ca8f"></div>
<div style="position:absolute;left:884px;top:636px;width:1px;height:44px;background:#d8ca8f"></div>
<div style="position:absolute;left:384px;top:651px;width:298px;height:1px;background:#d8ca8f"></div>
<div style="position:absolute;left:40px;top:637.02px;line-height:14px;font-size:11.5px;white-space:nowrap;transform:scaleX(0.98);transform-origin:left center;color:#333">Группа аналитического учета</div>
<div style="position:absolute;right:643px;top:637.02px;line-height:14px;font-size:11.5px;white-space:nowrap;text-align:right;transform:scaleX(0.98);transform-origin:right center;color:#333">Выручка</div>
<div style="position:absolute;left:387px;top:637.02px;line-height:14px;font-size:11.5px;white-space:nowrap;transform:scaleX(0.98);transform-origin:left center;color:#333">Себестоимость товаров</div>
<div style="position:absolute;right:543px;top:651.52px;line-height:14px;font-size:11.5px;white-space:nowrap;text-align:right;transform:scaleX(0.98);transform-origin:right center;color:#333">Всего</div>
<div style="position:absolute;right:447.5px;top:651.52px;line-height:14px;font-size:11.5px;white-space:nowrap;text-align:right;transform:scaleX(0.98);transform-origin:right center;color:#333">Стоимость</div>
<div style="position:absolute;right:444px;top:665.52px;line-height:14px;font-size:11.5px;white-space:nowrap;text-align:right;transform:scaleX(0.98);transform-origin:right center;color:#333">закупки</div>
<div style="position:absolute;right:344.5px;top:651.52px;line-height:14px;font-size:11.5px;white-space:nowrap;text-align:right;transform:scaleX(1.03);transform-origin:right center;color:#333">Доп. расходы</div>
<div style="position:absolute;right:265px;top:637.02px;line-height:14px;font-size:11.5px;white-space:nowrap;text-align:right;transform:scaleX(0.98);transform-origin:right center;color:#333">Валовая</div>
<div style="position:absolute;right:261px;top:651.52px;line-height:14px;font-size:11.5px;white-space:nowrap;text-align:right;transform:scaleX(0.98);transform-origin:right center;color:#333">прибыль</div>
<svg style="position:absolute;left:765px;top:639px" width="16" height="11" viewBox="0 0 16 11"><path d="M3.6 2.2 V7.6" stroke="#1660b8" stroke-width="1.8"/><path d="M1.1 6.9 L6.1 6.9 L3.6 9.9 Z" fill="#1660b8"/><path d="M8 1.5 H14.8" stroke="#444" stroke-width="1"/><path d="M8 4.3 H13 M8 6.7 H11.7 M8 9.5 H9.7" stroke="#8a8a80" stroke-width="1"/></svg>
<div style="position:absolute;right:146.5px;top:637.02px;line-height:14px;font-size:11.5px;white-space:nowrap;text-align:right;transform:scaleX(0.98);transform-origin:right center;color:#333">Рентабельность,</div>
<div style="position:absolute;right:143px;top:651.52px;line-height:14px;font-size:11.5px;white-space:nowrap;text-align:right;transform:scaleX(0.98);transform-origin:right center;color:#333">%</div>
<div style="position:absolute;left:37px;top:681px;width:847px;height:12px;background:#fff"></div>
<div style="position:absolute;left:284px;top:680px;width:1px;height:13px;background:#d8ca8f"></div>
<div style="position:absolute;left:384px;top:680px;width:1px;height:13px;background:#d8ca8f"></div>
<div style="position:absolute;left:483px;top:680px;width:1px;height:13px;background:#d8ca8f"></div>
<div style="position:absolute;left:582px;top:680px;width:1px;height:13px;background:#d8ca8f"></div>
<div style="position:absolute;left:682px;top:680px;width:1px;height:13px;background:#d8ca8f"></div>
<div style="position:absolute;left:781px;top:680px;width:1px;height:13px;background:#d8ca8f"></div>
<div style="position:absolute;left:884px;top:680px;width:1px;height:13px;background:#d8ca8f"></div>
<div style="position:absolute;left:37px;top:693px;width:848px;height:1px;background:#d8ca8f"></div>
<div style="position:absolute;left:38.5px;top:681.70px;line-height:12px;font-size:10.1px;white-space:nowrap;transform:scaleX(0.98);transform-origin:left center;color:#3a3a3a"></div>
<div style="position:absolute;right:641.5px;top:681.70px;line-height:12px;font-size:10.1px;white-space:nowrap;text-align:right;transform:scaleX(0.95);transform-origin:right center;color:#3a3a3a">488 044,49</div>
<div style="position:absolute;right:542.5px;top:681.70px;line-height:12px;font-size:10.1px;white-space:nowrap;text-align:right;transform:scaleX(0.95);transform-origin:right center;color:#3a3a3a">314,56</div>
<div style="position:absolute;right:443px;top:681.70px;line-height:12px;font-size:10.1px;white-space:nowrap;text-align:right;transform:scaleX(0.95);transform-origin:right center;color:#3a3a3a">314,56</div>
<div style="position:absolute;right:244.5px;top:681.70px;line-height:12px;font-size:10.1px;white-space:nowrap;text-align:right;transform:scaleX(0.95);transform-origin:right center;color:#3a3a3a">487 729,93</div>
<div style="position:absolute;right:142px;top:681.70px;line-height:12px;font-size:10.1px;white-space:nowrap;text-align:right;transform:scaleX(0.95);transform-origin:right center;color:#3a3a3a">99,94</div>
<div style="position:absolute;left:37px;top:694px;width:847px;height:13px;background:#fff"></div>
<div style="position:absolute;left:284px;top:693px;width:1px;height:14px;background:#d8ca8f"></div>
<div style="position:absolute;left:384px;top:693px;width:1px;height:14px;background:#d8ca8f"></div>
<div style="position:absolute;left:483px;top:693px;width:1px;height:14px;background:#d8ca8f"></div>
<div style="position:absolute;left:582px;top:693px;width:1px;height:14px;background:#d8ca8f"></div>
<div style="position:absolute;left:682px;top:693px;width:1px;height:14px;background:#d8ca8f"></div>
<div style="position:absolute;left:781px;top:693px;width:1px;height:14px;background:#d8ca8f"></div>
<div style="position:absolute;left:884px;top:693px;width:1px;height:14px;background:#d8ca8f"></div>
<div style="position:absolute;left:37px;top:707px;width:848px;height:1px;background:#d8ca8f"></div>
<div style="position:absolute;left:38.5px;top:694.70px;line-height:12px;font-size:10.1px;white-space:nowrap;transform:scaleX(0.98);transform-origin:left center;color:#3a3a3a">Изделия из дерева</div>
<div style="position:absolute;right:641.5px;top:694.70px;line-height:12px;font-size:10.1px;white-space:nowrap;text-align:right;transform:scaleX(0.95);transform-origin:right center;color:#3a3a3a">300 000,00</div>
<div style="position:absolute;right:542.5px;top:694.70px;line-height:12px;font-size:10.1px;white-space:nowrap;text-align:right;transform:scaleX(0.95);transform-origin:right center;color:#3a3a3a">12 000,00</div>
<div style="position:absolute;right:443px;top:694.70px;line-height:12px;font-size:10.1px;white-space:nowrap;text-align:right;transform:scaleX(0.95);transform-origin:right center;color:#3a3a3a">12 000,00</div>
<div style="position:absolute;right:244.5px;top:694.70px;line-height:12px;font-size:10.1px;white-space:nowrap;text-align:right;transform:scaleX(0.95);transform-origin:right center;color:#3a3a3a">288 000,00</div>
<div style="position:absolute;right:142px;top:694.70px;line-height:12px;font-size:10.1px;white-space:nowrap;text-align:right;transform:scaleX(0.95);transform-origin:right center;color:#3a3a3a">96,00</div>
<div style="position:absolute;left:37px;top:708px;width:847px;height:14px;background:#f3eac2"></div>
<div style="position:absolute;left:284px;top:707px;width:1px;height:15px;background:#d8ca8f"></div>
<div style="position:absolute;left:384px;top:707px;width:1px;height:15px;background:#d8ca8f"></div>
<div style="position:absolute;left:483px;top:707px;width:1px;height:15px;background:#d8ca8f"></div>
<div style="position:absolute;left:582px;top:707px;width:1px;height:15px;background:#d8ca8f"></div>
<div style="position:absolute;left:682px;top:707px;width:1px;height:15px;background:#d8ca8f"></div>
<div style="position:absolute;left:781px;top:707px;width:1px;height:15px;background:#d8ca8f"></div>
<div style="position:absolute;left:884px;top:707px;width:1px;height:15px;background:#d8ca8f"></div>
<div style="position:absolute;left:37px;top:722px;width:848px;height:1px;background:#d8ca8f"></div>
<div style="position:absolute;left:39.5px;top:707.97px;line-height:15px;font-size:12.2px;white-space:nowrap;transform:scaleX(0.94);transform-origin:left center;color:#333">Итого</div>
<div style="position:absolute;right:641.7px;top:707.97px;line-height:15px;font-size:12.2px;white-space:nowrap;text-align:right;transform:scaleX(0.94);transform-origin:right center;color:#333">788 044,49</div>
<div style="position:absolute;right:542.2px;top:707.97px;line-height:15px;font-size:12.2px;white-space:nowrap;text-align:right;transform:scaleX(0.94);transform-origin:right center;color:#333">12 314,56</div>
<div style="position:absolute;right:443px;top:707.97px;line-height:15px;font-size:12.2px;white-space:nowrap;text-align:right;transform:scaleX(0.94);transform-origin:right center;color:#333">12 314,56</div>
<div style="position:absolute;right:245.20000000000005px;top:707.97px;line-height:15px;font-size:12.2px;white-space:nowrap;text-align:right;transform:scaleX(0.94);transform-origin:right center;color:#333">775 729,93</div>
<div style="position:absolute;right:142.5px;top:707.97px;line-height:15px;font-size:12.2px;white-space:nowrap;text-align:right;transform:scaleX(0.94);transform-origin:right center;color:#333">98,44</div>
</body></html>
